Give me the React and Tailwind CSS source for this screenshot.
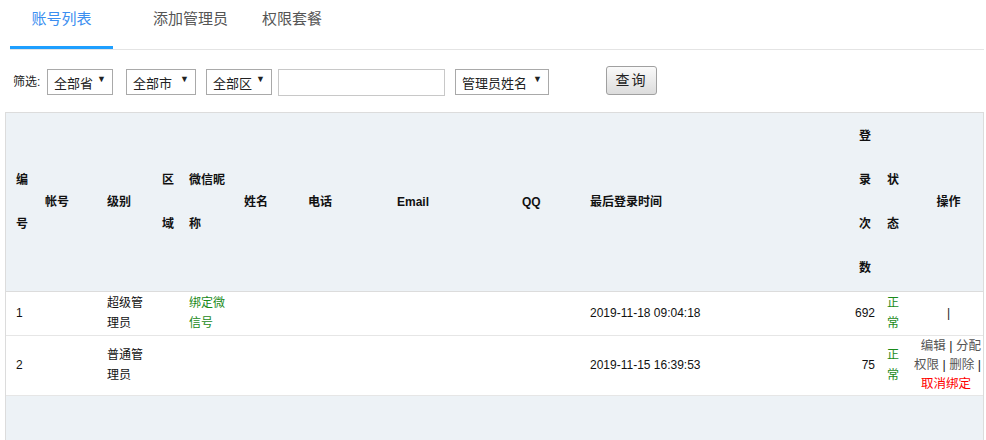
const F = { fontFamily: '"Liberation Sans", Arial, "Noto Sans CJK SC", sans-serif' }

function Sel({ w, label }) {
  return (
    <div className={`h-[26px] ${w} border border-[#a9a9a9] bg-white flex items-center justify-between pl-[6px] pr-[6px] text-[13px] text-[#222]`}>
      <span className="mt-[3px]">{label}</span>
      <span className="text-[9px] mt-[-4px]">▼</span>
    </div>
  )
}

const cols = [
  ['编号', 'pl-[10px] pr-[6px] text-left'],
  ['帐号', 'pl-[10px] text-left'],
  ['级别', 'pl-[10px] text-left'],
  ['区域', 'pl-[10px] pr-[4px] text-left'],
  ['微信昵称', 'pl-[10px] pr-[8px] text-left'],
  ['姓名', 'pl-[10px] text-left'],
  ['电话', 'pl-[10px] text-left'],
  ['Email', 'pl-[10px] text-left'],
  ['QQ', 'pl-[10px] text-left'],
  ['最后登录时间', 'pl-[10px] text-left'],
  ['登录次数', 'pl-[10px] pr-[4px] text-left'],
  ['状态', 'pl-[10px] pr-[4px] text-left'],
  ['操作', 'pl-[10px] text-center'],
]

const Sep = () => <span className="text-[#222]"> | </span>

export default function App() {
  return (
    <div style={F} className="w-[986px] h-[440px] bg-white overflow-hidden">
      <div className="flex border-b border-[#e4e4e4] h-[50px] ml-[10px] mr-[2px] pl-0">
        <div className="w-[103px] h-[49px] border-b-[3px] border-[#1e9fff] text-[#3b8ef0] text-[15px] flex justify-center pt-[8px] box-border">账号列表</div>
        <div className="ml-[40px] text-[#555] text-[15px] pt-[8px]">添加管理员</div>
        <div className="ml-[34px] text-[#555] text-[15px] pt-[8px]">权限套餐</div>
      </div>
      <div className="flex items-center h-[62px] pt-[2px] pl-[13px] text-[12px] text-[#222]">
        <span className="mr-[4px] w-[30px]">筛选:</span>
        <Sel w="w-[66px]" label="全部省" />
        <div className="w-[13px]" />
        <Sel w="w-[70px]" label="全部市" />
        <div className="w-[10px]" />
        <Sel w="w-[66px]" label="全部区" />
        <div className="w-[6px] " />
        <div className="w-[167px] h-[27px] border border-[#c8c8c8] bg-white" />
        <div className="w-[10px]" />
        <Sel w="w-[94px]" label="管理员姓名" />
        <button className="ml-[57px] mt-[-3px] w-[51px] h-[29px] rounded-[3px] border border-[#a0a0a0] bg-gradient-to-b from-[#fafafa] to-[#dcdcdc] text-[14px] tracking-[2px] text-[#222]">查询</button>
      </div>
      <div className="ml-[5px] w-[979px] border border-[#dcdcdc]">
        <table className="w-full table-fixed border-collapse text-[12px] text-[#111]">
          <colgroup>
            <col className="w-[29px]" /><col className="w-[62px]" /><col className="w-[55px]" /><col className="w-[27px]" />
            <col className="w-[55px]" /><col className="w-[64px]" /><col className="w-[89px]" /><col className="w-[125px]" />
            <col className="w-[68px]" /><col className="w-[269px]" /><col className="w-[28px]" /><col className="w-[27px]" /><col />
          </colgroup>
          <thead>
            <tr className="bg-[#edf2f6] h-[178px] border-b border-[#dcdcdc]">
              {cols.map(([t, p]) => (
                <th key={t} className={`${p} font-bold leading-[44px] align-middle break-all`}>{t}</th>
              ))}
            </tr>
          </thead>
          <tbody>
            <tr className="h-[44px] border-b border-[#e6e6e6]">
              <td className="pl-[10px]">1</td><td /><td className="pl-[10px] leading-[20px] pr-[2px]">超级管理员</td><td />
              <td className="pl-[10px] leading-[20px] text-[#1a8a1a] pr-[2px]">绑定微信号</td><td /><td /><td /><td />
              <td className="pl-[10px]">2019-11-18 09:04:18</td>
              <td className="text-right pr-[2px] overflow-visible whitespace-nowrap">692</td>
              <td className="pl-[10px] leading-[20px] text-[#1a8a1a]">正常</td>
              <td className="text-center pl-[10px] text-[#222]">|</td>
            </tr>
            <tr className="h-[60px]">
              <td className="pl-[10px]">2</td><td /><td className="pl-[10px] leading-[20px] pr-[2px]">普通管理员</td><td />
              <td /><td /><td /><td /><td />
              <td className="pl-[10px]">2019-11-15 16:39:53</td>
              <td className="text-right pr-[2px] whitespace-nowrap">75</td>
              <td className="pl-[10px] leading-[20px] text-[#1a8a1a]">正常</td>
              <td className="text-right pr-[2px] leading-[19px] text-[#555] text-[12.5px] whitespace-nowrap">
                编辑<Sep />分配<br />权限<Sep />删除<Sep /><br /><span className="text-[#f00] mr-[10px]">取消绑定</span>
              </td>
            </tr>
            <tr className="h-[45px] bg-[#edf2f6] border-t border-[#e6e6e6]"><td colSpan={13} /></tr>
          </tbody>
        </table>
      </div>
    </div>
  )
}
